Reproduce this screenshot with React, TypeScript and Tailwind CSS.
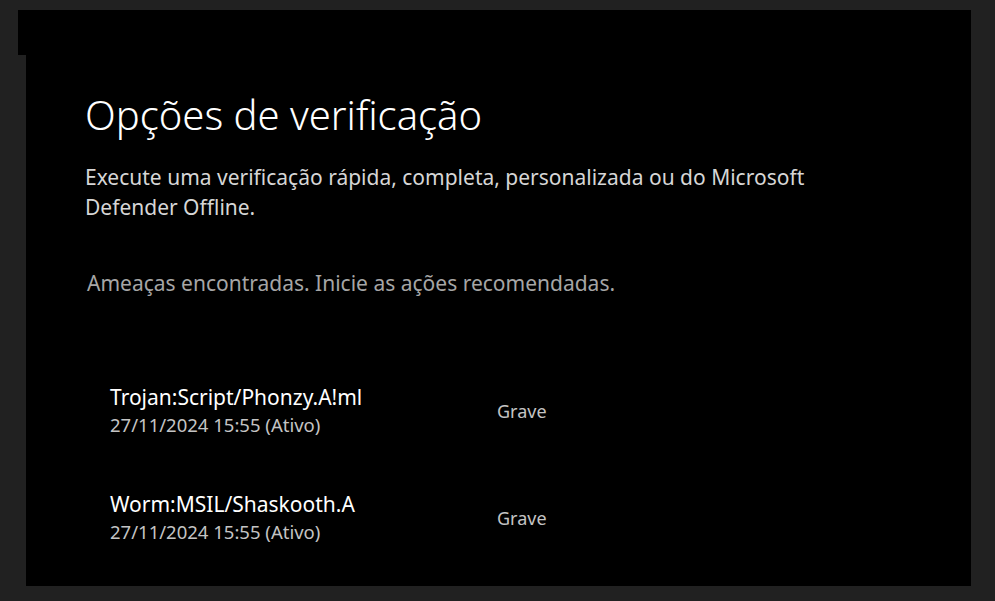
const threats = [
  { name: 'Trojan:Script/Phonzy.A!ml', date: '27/11/2024 15:55 (Ativo)', level: 'Grave' },
  { name: 'Worm:MSIL/Shaskooth.A', date: '27/11/2024 15:55 (Ativo)', level: 'Grave' },
]

export default function App() {
  return (
    <div
      className="h-[601px] w-[995px] overflow-hidden bg-[#212121] pl-[18px] pt-[10px]"
      style={{ fontFamily: '"Noto Sans", "Open Sans", sans-serif' }}
    >
      <div className="flex">
        <div className="h-[45px] w-[8px] bg-black" />
        <div className="h-[576px] w-[945px] bg-black pl-[59px] pt-[81px]">
          <h1 className="text-[40px] font-light leading-[48px] text-white">Opções de verificação</h1>
          <p className="mt-[23px] w-[760px] text-[21px] leading-[30px] text-[#d6d6d6]">
            Execute uma verificação rápida, completa, personalizada ou do Microsoft Defender Offline.
          </p>
          <p className="ml-[2px] mt-[46px] text-[21px] leading-[30px] text-[#a6a6a6]">
            Ameaças encontradas. Inicie as ações recomendadas.
          </p>

          <div className="mt-[85px] flex flex-col gap-[51px] pl-[25px]">
            {threats.map((t) => (
              <div key={t.name} className="flex items-center">
                <div className="w-[387px]">
                  <div className="text-[21px] leading-[28px] text-white">{t.name}</div>
                  <div className="text-[18.5px] leading-[28px] text-[#c4c4c4]">{t.date}</div>
                </div>
                <div className="text-[18px] text-[#c4c4c4]">{t.level}</div>
              </div>
            ))}
          </div>
        </div>
      </div>
    </div>
  )
}
